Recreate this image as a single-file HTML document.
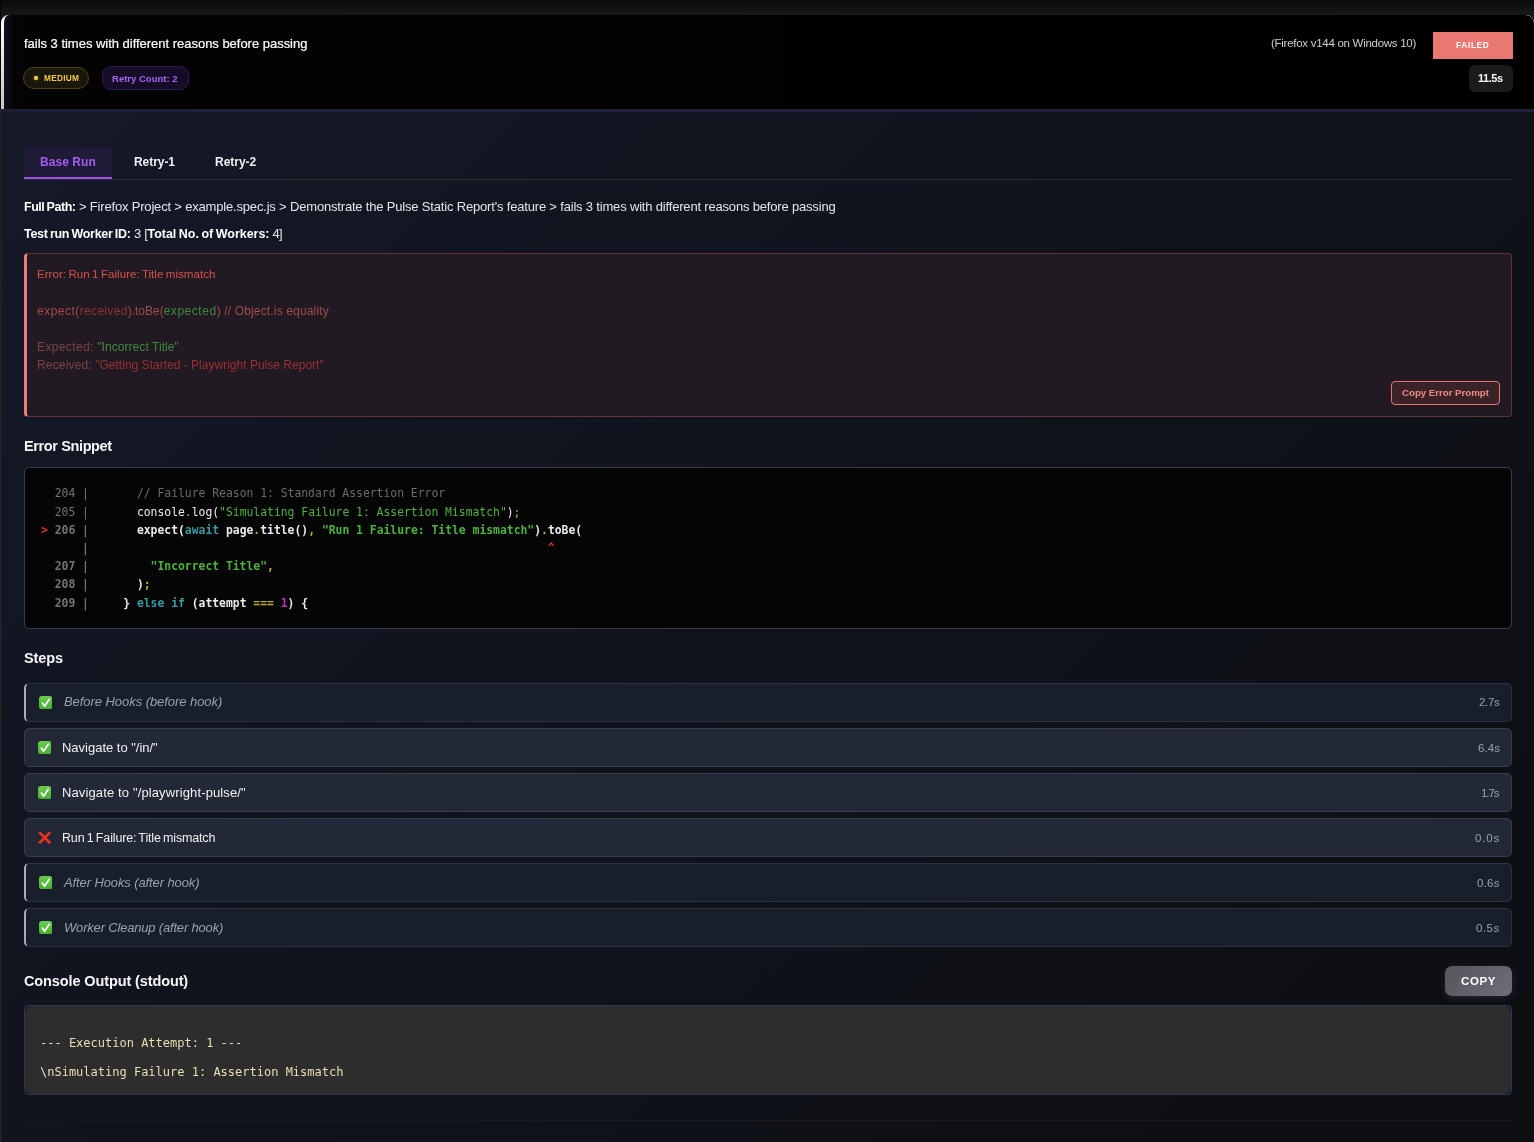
<!DOCTYPE html>
<html lang="en">
<head>
<meta charset="utf-8">
<title>Pulse Report - Test Detail</title>
<style>
*{box-sizing:border-box;margin:0;padding:0}
html,body{width:1534px;height:1142px;overflow:hidden;background:#11141c}
body{font-family:"Liberation Sans",sans-serif;color:#f2f2f4;position:relative}
.abs{position:absolute;white-space:nowrap}
.t,.tab,.err,.code,.ctxt{will-change:transform}
.topband{left:0;top:0;width:1534px;height:15px;background:linear-gradient(180deg,#0a0b0b 0%,#171818 100%)}
.card{left:0;top:15px;width:1534px;height:1127px;background:linear-gradient(135deg,#151929 0%,#10131b 50%,#0d0e12 100%)}
.ledge{left:0;top:109px;width:2px;height:1033px;background:linear-gradient(90deg,#232323 0,#232323 1px,#1a1b20 1px,#1a1b20 2px)}
.header{left:1px;top:15px;width:1533px;height:94px;border-radius:8px 8px 0 0;overflow:hidden;background:linear-gradient(180deg,#fff 0%,#c6c6c6 100%)}
.hin{left:3px;top:0;right:0;bottom:0;border-radius:5px 8px 0 0/8px 8px 0 0;background:linear-gradient(90deg,#0d1020 0,#040406 10px,#030303 36px,#000 100%)}
.hx0{left:0;top:0;width:1px;height:109px;background:#060606}
.hline{left:1px;top:110px;width:1533px;height:2px;background:linear-gradient(180deg,#1e2042 0,#1b1d3b 100%)}
.hline0{left:1px;top:109px;width:1533px;height:1px;background:#232324}
.t{line-height:20px;height:20px}
.b{font-weight:bold}
.mono{font-family:"DejaVu Sans Mono","Liberation Mono",monospace}
.title{left:24px;top:33px;font-size:13px;color:#fff;-webkit-text-stroke:.2px #fff}
.badge{display:flex;align-items:center;justify-content:center}
.sev{left:23px;top:67px;width:66px;height:22px;border:1px solid #4f4115;border-radius:11px;background:#19160b}
.sevdot{left:33.8px;top:75.8px;width:4.5px;height:4.5px;border-radius:1.4px;background:#f6c945;box-shadow:0 0 3px #f6c94577}
.sevtxt{left:43.6px;top:68px;font-size:8.3px;font-weight:bold;color:#f1c944}
.retry{left:102px;top:65.5px;width:87px;height:24.6px;border:1px solid #33195a;border-radius:9px;background:#150c25}
.retrytxt{left:112.4px;top:68px;font-size:9.6px;font-weight:bold;color:#a463f2}
.env{left:1271.3px;top:33px;font-size:11.5px;color:#cdcdd0}
.failed{left:1433px;top:32px;width:80px;height:26.6px;background:#e97873}
.failedtxt{left:1455.9px;top:35px;font-size:8.3px;font-weight:bold;color:#fff}
.dur{left:1469.3px;top:65px;width:43.6px;height:26.8px;background:#1b1b1d;border-radius:6px}
.durtxt{left:1478px;top:68px;font-size:11px;font-weight:bold;color:#f4f4f4}
.tabline{left:24px;top:179px;width:1488px;height:1px;background:#2b2b2e}
.tabact{left:24px;top:147px;width:88px;height:32px;background:#1f1a36}
.tabbar{left:24px;top:176.7px;width:88px;height:2.6px;background:#9b51e8}
.tab{top:151px;font-size:12px;font-weight:bold;line-height:20px;color:#f0f0f2}
.meta{font-size:13px;color:#e4e5ea}
.meta b{color:#fff;font-size:12.5px}
.errbox{left:24px;top:253px;width:1488px;height:164px;background:#211a22;border:1px solid #5f343b;border-left:3px solid #ec7d77;border-radius:4px}
.err{left:36.7px;font-size:12px;line-height:18px;height:18px;color:#a14a4c}
.cbtn{left:1391px;top:381px;width:109px;height:24px;border:1.5px solid #e57373;border-radius:4px;background:#3a2226}
.cbtntxt{left:1402px;top:383px;font-size:9.7px;font-weight:bold;color:#ee8a86}
.h{left:24px;font-size:14.5px;font-weight:bold;color:#f6f6f8}
.codebox{left:24px;top:467.2px;width:1488px;height:162px;background:#050505;border:1px solid #353d4f;border-radius:5px}
.code{left:40.5px;font-size:11.39px;line-height:18px;height:18px;white-space:pre;color:#ececec}
.g{color:#747474}.cm{color:#6b6b6b}.y{color:#b8ae2e}.s{color:#4db33d}.k{color:#3a9aa3}.r{color:#e2321f}.m{color:#b535b5}
.step{left:24px;width:1488px;height:39px;background:#232836;border:1px solid #353d4f;border-radius:5px}
.hook{background:#191e2b;border-color:#2b3243;border-left:2.7px solid #a6abbb}
.stxt{font-size:13px;color:#f1f1f3}
.htxt{font-size:13px;font-style:italic;color:#9ba1ae}
.sdur{font-size:11.5px;color:#9ba1ae}
.ico{width:13.4px;height:13.4px}
.copy{left:1445px;top:966px;width:67px;height:30px;border-radius:7px;background:linear-gradient(135deg,#55555e 0%,#6e6e78 100%);box-shadow:0 2px 7px rgba(120,120,135,.22)}
.copytxt{left:1461px;top:971px;font-size:11.5px;font-weight:bold;color:#fff;letter-spacing:.6px}
.conwrap{left:24px;top:1005.3px;width:1488px;height:89.7px;background:#151d3a;border:1px solid #2e384e;border-radius:4px}
.con{left:25px;top:1006.3px;width:1486px;height:87.7px;background:#2d2d2d;border-radius:8px}
.ctxt{left:40px;font-size:12px;line-height:18px;height:18px;color:#ebdfb5;white-space:pre}
.footline{left:24px;top:1120px;width:1488px;height:1px;background:#181a20}
#w1,#w3,#pathb{word-spacing:-.8px}
/*FIT*/
#title{letter-spacing:-0.021px;top:34px!important}
#sevtxt{letter-spacing:0.27px;top:68px!important}
#retrytxt{letter-spacing:-0.038px;top:69px!important}
#env{letter-spacing:-0.276px;top:33px!important}
#failedtxt{letter-spacing:0.659px;top:35px!important}
#durtxt{letter-spacing:-0.481px;top:68px!important}
#tab0{letter-spacing:0.064px;top:152px!important}
#tab1{letter-spacing:-0.059px;top:152px!important}
#tab2{letter-spacing:-0.025px;top:152px!important}
#pathb{letter-spacing:-0.461px}
#pathr{letter-spacing:-0.18px}
#path{top:197px!important}
#w1{letter-spacing:-0.307px}
#w2{letter-spacing:-0.294px}
#w3{letter-spacing:-0.042px}
#w4{letter-spacing:-0.662px}
#worker{top:224px!important}
#e1{letter-spacing:0.002px;top:265px!important}
#e2a{letter-spacing:0.492px}
#e2b{letter-spacing:0.307px}
#e2c{letter-spacing:-0.002px}
#e2d{letter-spacing:0.539px}
#e2e{letter-spacing:0.152px}
#e2{top:302px!important}
#e3a{letter-spacing:0.379px}
#e3b{letter-spacing:0.067px}
#e3{top:338px!important}
#e4a{letter-spacing:0.168px}
#e4b{letter-spacing:0.012px}
#e4{top:356px!important}
#cbtntxt{letter-spacing:-0.019px;top:383px!important}
#h1{letter-spacing:-0.379px;top:436px!important}
#h2{letter-spacing:-0.122px;top:648px!important}
#h3{letter-spacing:-0.115px;top:971px!important}
#c1{top:484px!important}
#c2{top:503px!important}
#c3{top:521px!important}
#c4{top:539px!important}
#c5{top:557px!important}
#c6{top:575px!important}
#c7{top:594px!important}
#s1{letter-spacing:-0.056px;top:692px!important}
#s2{letter-spacing:-0.015px;top:738px!important}
#s3{letter-spacing:0.127px;top:783px!important}
#s4{letter-spacing:-0.159px;top:828px!important}
#s5{letter-spacing:-0.109px;top:873px!important}
#s6{letter-spacing:-0.182px;top:918px!important}
#d1{letter-spacing:-0.313px;top:692px!important}
#d2{letter-spacing:0.089px;top:738px!important}
#d3{letter-spacing:-1.047px;top:783px!important}
#d4{letter-spacing:0.82px;top:828px!important}
#d5{letter-spacing:0.253px;top:873px!important}
#d6{letter-spacing:0.488px;top:918px!important}
#copytxt{letter-spacing:0.602px;top:971px!important}
#o1{top:1034px!important}
#o2{top:1063px!important}
/*ENDFIT*/
</style>
</head>
<body>
<div class="abs topband"></div>
<div class="abs card"></div>
<div class="abs ledge"></div>
<div class="abs hx0"></div>
<div class="abs header"><div class="abs hin"></div></div>
<div class="abs hline0"></div><div class="abs hline"></div>

<div class="abs t title" id="title">fails 3 times with different reasons before passing</div>

<div class="abs sev"></div><div class="abs sevdot"></div>
<div class="abs t sevtxt" id="sevtxt">MEDIUM</div>
<div class="abs retry"></div>
<div class="abs t retrytxt" id="retrytxt">Retry Count: 2</div>

<div class="abs t env" id="env">(Firefox v144 on Windows 10)</div>
<div class="abs failed"></div>
<div class="abs t failedtxt" id="failedtxt">FAILED</div>
<div class="abs dur"></div>
<div class="abs t durtxt" id="durtxt">11.5s</div>

<div class="abs tabline"></div>
<div class="abs tabact"></div><div class="abs tabbar"></div>
<div class="abs tab" id="tab0" style="left:40px;color:#a35cf0">Base Run</div>
<div class="abs tab" id="tab1" style="left:134px">Retry-1</div>
<div class="abs tab" id="tab2" style="left:215px">Retry-2</div>

<div class="abs t meta" id="path" style="left:24.3px;top:197px"><b id="pathb">Full Path:</b><span id="pathr"> &gt; Firefox Project &gt; example.spec.js &gt; Demonstrate the Pulse Static Report's feature &gt; fails 3 times with different reasons before passing</span></div>
<div class="abs t meta" id="worker" style="left:23.8px;top:224px"><b id="w1">Test run Worker ID:</b><span id="w2"> 3 [</span><b id="w3">Total No. of Workers:</b><span id="w4"> 4]</span></div>

<div class="abs errbox"></div>
<div class="abs err" id="e1" style="top:265px;color:#d5524b;font-size:11.6px;word-spacing:-.8px">Error: Run 1 Failure: Title mismatch</div>
<div class="abs err" id="e2" style="top:301px"><span id="e2a">expect(</span><span id="e2b" style="color:#8e3436">received</span><span id="e2c">).toBe(</span><span id="e2d" style="color:#3f8a3c">expected</span><span id="e2e">) // Object.is equality</span></div>
<div class="abs err" id="e3" style="top:338px;color:#7d4447"><span id="e3a">Expected:</span><span id="e3b" style="color:#3f8a3c"> "Incorrect Title"</span></div>
<div class="abs err" id="e4" style="top:356px;color:#7d4447"><span id="e4a">Received:</span><span id="e4b" style="color:#9a3032"> "Getting Started - Playwright Pulse Report"</span></div>
<div class="abs cbtn"></div>
<div class="abs t cbtntxt" id="cbtntxt">Copy Error Prompt</div>

<div class="abs t h" id="h1" style="top:435px">Error Snippet</div>
<div class="abs codebox"></div>
<div class="abs code mono" id="c1" style="top:484px"><span class="g">  204 |</span>       <span class="cm">// Failure Reason 1: Standard Assertion Error</span></div>
<div class="abs code mono" id="c2" style="top:502px"><span class="g">  205 |</span>       console<span class="y">.</span>log(<span class="s">"Simulating Failure 1: Assertion Mismatch"</span>)<span class="y">;</span></div>
<div class="abs code mono b" id="c3" style="top:520px"><span class="r">&gt;</span><span class="g"> 206 |</span>       expect(<span class="k">await</span> page<span class="y">.</span>title()<span class="y">,</span> <span class="s">"Run 1 Failure: Title mismatch"</span>)<span class="y">.</span>toBe(</div>
<div class="abs code mono b" id="c4" style="top:539px"><span class="g">      |</span>                                                                   <span class="r">^</span></div>
<div class="abs code mono b" id="c5" style="top:557px"><span class="g">  207 |</span>         <span class="s">"Incorrect Title"</span><span class="y">,</span></div>
<div class="abs code mono b" id="c6" style="top:575px"><span class="g">  208 |</span>       )<span class="y">;</span></div>
<div class="abs code mono b" id="c7" style="top:593px"><span class="g">  209 |</span>     } <span class="k">else if</span> (attempt <span class="y">===</span> <span class="m">1</span>) {</div>

<div class="abs t h" id="h2" style="top:647px">Steps</div>

<div class="abs step hook" style="top:682.8px"></div>
<div class="abs step" style="top:727.8px"></div>
<div class="abs step" style="top:772.8px"></div>
<div class="abs step" style="top:817.8px"></div>
<div class="abs step hook" style="top:862.8px"></div>
<div class="abs step hook" style="top:907.8px"></div>

<svg width="0" height="0" style="position:absolute"><defs><linearGradient id="gg" x1="0" y1="0" x2="0" y2="1"><stop offset="0" stop-color="#68cc4e"/><stop offset="1" stop-color="#4aad33"/></linearGradient></defs></svg>
<svg class="abs ico" style="left:39px;top:695.8px" viewBox="0 0 13 13"><rect width="13" height="13" rx="3" fill="url(#gg)"/><path d="M3.0 6.3 L5.4 10.0 L10.3 2.7" fill="none" stroke="#fff" stroke-width="1.6" stroke-linecap="butt" stroke-linejoin="round"/></svg>
<svg class="abs ico" style="left:37.6px;top:741px" viewBox="0 0 13 13"><rect width="13" height="13" rx="3" fill="url(#gg)"/><path d="M3.0 6.3 L5.4 10.0 L10.3 2.7" fill="none" stroke="#fff" stroke-width="1.6" stroke-linecap="butt" stroke-linejoin="round"/></svg>
<svg class="abs ico" style="left:37.6px;top:786px" viewBox="0 0 13 13"><rect width="13" height="13" rx="3" fill="url(#gg)"/><path d="M3.0 6.3 L5.4 10.0 L10.3 2.7" fill="none" stroke="#fff" stroke-width="1.6" stroke-linecap="butt" stroke-linejoin="round"/></svg>
<svg class="abs ico" style="left:37.6px;top:830.8px" viewBox="0 0 13 13"><path d="M1.1 1.1 L11.9 11.9 M11.9 1.1 L1.1 11.9" fill="none" stroke="#e8341f" stroke-width="2.7" stroke-linecap="butt"/></svg>
<svg class="abs ico" style="left:39px;top:876px" viewBox="0 0 13 13"><rect width="13" height="13" rx="3" fill="url(#gg)"/><path d="M3.0 6.3 L5.4 10.0 L10.3 2.7" fill="none" stroke="#fff" stroke-width="1.6" stroke-linecap="butt" stroke-linejoin="round"/></svg>
<svg class="abs ico" style="left:39px;top:921px" viewBox="0 0 13 13"><rect width="13" height="13" rx="3" fill="url(#gg)"/><path d="M3.0 6.3 L5.4 10.0 L10.3 2.7" fill="none" stroke="#fff" stroke-width="1.6" stroke-linecap="butt" stroke-linejoin="round"/></svg>

<div class="abs t htxt" id="s1" style="left:64px;top:692px">Before Hooks (before hook)</div>
<div class="abs t stxt" id="s2" style="left:62px;top:737px">Navigate to "/in/"</div>
<div class="abs t stxt" id="s3" style="left:62px;top:782px">Navigate to "/playwright-pulse/"</div>
<div class="abs t stxt" id="s4" style="left:62px;top:827px;font-size:12.5px;word-spacing:-1px">Run 1 Failure: Title mismatch</div>
<div class="abs t htxt" id="s5" style="left:64px;top:872px">After Hooks (after hook)</div>
<div class="abs t htxt" id="s6" style="left:64px;top:917px">Worker Cleanup (after hook)</div>

<div class="abs t sdur" id="d1" style="left:1478.8px;top:692px">2.7s</div>
<div class="abs t sdur" id="d2" style="left:1477.6px;top:737px">6.4s</div>
<div class="abs t sdur" id="d3" style="left:1481.0px;top:782px">1.7s</div>
<div class="abs t sdur" id="d4" style="left:1475.4px;top:827px">0.0s</div>
<div class="abs t sdur" id="d5" style="left:1477.1px;top:872px">0.6s</div>
<div class="abs t sdur" id="d6" style="left:1476.4px;top:917px">0.5s</div>

<div class="abs t h" id="h3" style="top:971px">Console Output (stdout)</div>
<div class="abs copy"></div>
<div class="abs t copytxt" id="copytxt">COPY</div>
<div class="abs conwrap"></div><div class="abs con"></div>
<div class="abs ctxt mono" id="o1" style="top:1034px">--- Execution Attempt: 1 ---</div>
<div class="abs ctxt mono" id="o2" style="top:1062px">\nSimulating Failure 1: Assertion Mismatch</div>
<div class="abs footline"></div>
</body>
</html>
